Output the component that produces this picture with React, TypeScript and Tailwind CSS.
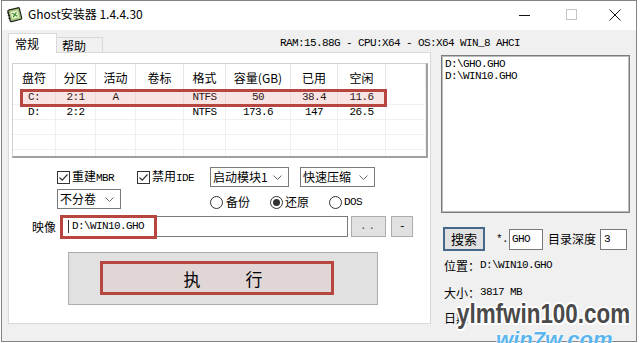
import React from 'react';

const cjk = "font-['Noto_Sans_CJK_SC','Noto_Sans',sans-serif]";
const mono = "font-['Liberation_Mono','Noto_Sans_CJK_SC',monospace] text-[11px] tracking-[-0.6px]";

const AppIcon = () => (
    <svg width="17" height="17" viewBox="0 0 18 18">
        <g transform="rotate(-14 9 9)">
            <rect x="3" y="3" width="12.5" height="12.5" rx="1.2" fill="#a7c97a" stroke="#222" strokeWidth="1.3" />
            <rect x="5.5" y="5.5" width="7.5" height="7.5" fill="#e6f0cf" />
            <path d="M7 7.2 L11.5 11.5 M11.5 7.2 L7 11.5" stroke="#3e8a30" strokeWidth="1.3" />
            <path d="M1.8 5.5 h2.4 M1.8 8.5 h2.4 M1.8 11.5 h2.4" stroke="#222" strokeWidth="1.1" />
        </g>
    </svg>
);

const Chevron = () => (
    <svg width="9" height="5" viewBox="0 0 9 5" className="shrink-0">
        <path d="M0.5 0.5 L4.5 4.5 L8.5 0.5" fill="none" stroke="#6a6a6a" strokeWidth="1" />
    </svg>
);

const CheckBox = () => (
    <div className="w-[13px] h-[13px] border border-[#333] bg-white flex items-center justify-center shrink-0">
        <svg width="11" height="11" viewBox="0 0 11 11">
            <path d="M1.5 5.5 L4.2 8.2 L9.5 2.5" fill="none" stroke="#333" strokeWidth="1.2" />
        </svg>
    </div>
);

const Radio = ({ checked }: { checked?: boolean }) => (
    <div className="w-[13px] h-[13px] rounded-full border border-[#333] bg-white flex items-center justify-center shrink-0">
        {checked && <div className="w-[7px] h-[7px] rounded-full bg-[#333]" />}
    </div>
);

const Select = ({ label, className }: { label: React.ReactNode; className: string }) => (
    <div className={`h-[20px] border border-[#7a7a7a] bg-white flex items-center justify-between pl-[2px] pr-[6px] text-[12px] text-black ${cjk} ${className}`}>
        <span className="leading-none">{label}</span>
        <Chevron />
    </div>
);

const headers = ['盘符', '分区', '活动', '卷标', '格式', '容量(GB)', '已用', '空闲', ''];
const rows = [
    ['C:', '2:1', 'A', '', 'NTFS', '50', '38.4', '11.6', ''],
    ['D:', '2:2', '', '', 'NTFS', '173.6', '147', '26.5', ''],
    ['', '', '', '', '', '', '', '', ''],
    ['', '', '', '', '', '', '', '', ''],
    ['', '', '', '', '', '', '', '', ''],
];

export default function App() {
    return (
        <div className="w-[640px] h-[343px] bg-white relative overflow-hidden">
            <div className="ml-px w-[636px] h-[342px] border border-[#838383] bg-[#f0f0f0] flex flex-col">
                {/* Title bar */}
                <div className="h-[29px] bg-white flex items-start shrink-0">
                    <div className="ml-[4px] mt-[5px]"><AppIcon /></div>
                    <div className={`ml-[5px] mt-[5px] text-[12px] leading-[16px] text-black ${cjk}`}>Ghost安装器 1.4.4.30</div>
                    <div className="ml-auto mr-[15px] mt-[8px] flex items-start">
                        <svg width="11" height="11" viewBox="0 0 11 11" className="mr-[36px]">
                            <path d="M0 6.5 H11" stroke="#111" strokeWidth="1" />
                        </svg>
                        <svg width="11" height="11" viewBox="0 0 11 11" className="mr-[32px]">
                            <rect x="0.5" y="0.5" width="10" height="10" fill="none" stroke="#c4c4c4" strokeWidth="1" />
                        </svg>
                        <svg width="12" height="12" viewBox="0 0 12 12">
                            <path d="M0.5 0.5 L11.5 11.5 M11.5 0.5 L0.5 11.5" stroke="#111" strokeWidth="1" />
                        </svg>
                    </div>
                </div>

                {/* Body */}
                <div className="flex-1 pl-[6px] pt-[3px]">
                    {/* Tabs + system info */}
                    <div className="flex items-end h-[20px]">
                        <div className={`relative z-10 w-[49px] h-[20px] bg-white border border-b-0 border-[#d9d9d9] pl-[6px] pt-[2px] text-[12px] leading-[15px] text-black ${cjk}`}>
                            常规
                        </div>
                        <div className={`w-[46px] h-[16px] bg-[#f0f0f0] border border-l-0 border-b-0 border-[#d9d9d9] pl-[5px] pt-[1px] text-[12px] leading-[14px] text-black ${cjk}`}>
                            帮助
                        </div>
                        <div className={`ml-[177px] self-center text-black ${mono}`}>RAM:15.88G - CPU:X64 - OS:X64 WIN_8 AHCI</div>
                    </div>

                    <div className="flex items-start -mt-px">
                        {/* Main tab panel */}
                        <div className="relative w-[423px] h-[272px] bg-white border border-[#d9d9d9] pl-[3px] pt-[10px] flex flex-col">
                            {/* Partition list */}
                            <div className="relative w-[416px] h-[95px] bg-white border-t border-l border-[#d0d0d0] border-r-2 border-b-2 border-r-[#a0a0a0] border-b-[#a0a0a0] overflow-hidden">
                                <div className="grid grid-cols-[43px_40px_40px_48px_42px_65px_47px_48px_1fr]">
                                    {headers.map((h, i) => (
                                        <div key={i} className={`h-[26px] border-r border-[#e6e6e6] flex items-center justify-center pt-[2px] text-[12px] text-black ${cjk}`}>
                                            {h}
                                        </div>
                                    ))}
                                    {rows.map((r, ri) =>
                                        r.map((c, ci) => (
                                            <div key={`${ri}-${ci}`} className={`h-[15px] border-r border-b border-[#efefef] flex items-center justify-center text-black ${mono}`}>
                                                {c}
                                            </div>
                                        ))
                                    )}
                                </div>
                                <div className="absolute left-[7px] top-[25px] w-[367px] h-[18px] border-[3px] border-[#b6463f] bg-[#e07a7a]/20 pointer-events-none" />
                            </div>

                            {/* Options row 1 */}
                            <div className="mt-[9px] ml-[45px] h-[20px] flex items-center">
                                <div className="w-[80px] flex items-center">
                                    <CheckBox />
                                    <span className={`ml-[2px] text-[12px] text-black ${cjk}`}>重建<span className={mono}>MBR</span></span>
                                </div>
                                <div className="w-[73px] flex items-center">
                                    <CheckBox />
                                    <span className={`ml-[2px] text-[12px] text-black ${cjk}`}>禁用<span className={mono}>IDE</span></span>
                                </div>
                                <Select label="启动模块1" className="w-[79px]" />
                                <Select label="快速压缩" className="w-[75px] ml-[11px]" />
                            </div>

                            {/* Options row 2 */}
                            <div className="mt-[2px] ml-[45px] h-[20px] flex items-center">
                                <Select label="不分卷" className="w-[64px]" />
                                <div className="ml-[89px] mt-[6px] flex items-center">
                                    <div className="w-[60px] flex items-center">
                                        <Radio />
                                        <span className={`ml-[3px] text-[12px] text-black ${cjk}`}>备份</span>
                                    </div>
                                    <div className="w-[59px] flex items-center">
                                        <Radio checked />
                                        <span className={`ml-[2px] text-[12px] text-black ${cjk}`}>还原</span>
                                    </div>
                                    <div className="flex items-center">
                                        <Radio />
                                        <span className={`ml-[2px] text-black ${mono}`}>DOS</span>
                                    </div>
                                </div>
                            </div>

                            {/* Image path */}
                            <div className="mt-[7px] h-[21px] flex items-center">
                                <span className={`ml-[20px] w-[28px] text-[12px] text-black ${cjk}`}>映像</span>
                                <div className="relative w-[288px] h-[21px] border border-[#7a7a7a] bg-white flex items-center pl-[11px]">
                                    <div className="absolute left-[7px] top-[3px] w-px h-[13px] bg-[#333]" />
                                    <span className={`text-black ${mono}`}>D:\WIN10.GHO</span>
                                    <div className="absolute left-[-1px] top-[-2px] w-[97px] h-[24px] border-[3px] border-[#b6463f] pointer-events-none" />
                                </div>
                                <div className={`ml-[3px] w-[35px] h-[21px] bg-[#e1e1e1] border border-[#adadad] flex items-center justify-center text-[#555] ${mono} tracking-[2px]`}>..</div>
                                <div className={`ml-[5px] w-[22px] h-[21px] bg-[#e1e1e1] border border-[#adadad] flex items-center justify-center text-black ${mono}`}>-</div>
                            </div>

                            {/* Execute */}
                            <div className="relative mt-[15px] ml-[56px] w-[310px] h-[53px] bg-[#e1e1e1] border border-[#adadad] flex items-center justify-center">
                                <div className="absolute left-[31px] top-[8px] w-[234px] h-[34px] border-[3px] border-[#b6463f] bg-[#e07a7a]/10" />
                                <div className={`relative flex gap-[45px] text-[17px] leading-none text-black ${cjk}`}>
                                    <span>执</span>
                                    <span>行</span>
                                </div>
                            </div>
                        </div>

                        {/* Right column */}
                        <div className="ml-[10px] mt-[3px] w-[189px] flex flex-col">
                            <div className="h-[158px] bg-white border border-[#7c7c7c] shadow-[inset_0_0_0_1px_#bcbcbc] pl-[3px] pt-[2px]">
                                <div className={`leading-[12px] text-black ${mono}`}>D:\GHO.GHO</div>
                                <div className={`leading-[12px] text-black ${mono}`}>D:\WIN10.GHO</div>
                            </div>

                            <div className="mt-[14px] h-[24px] flex items-center">
                                <div className={`ml-[2px] w-[42px] h-[24px] bg-[#e1e1e1] border-2 border-[#44678a] flex items-center justify-center text-[13px] text-black ${cjk}`}>搜索</div>
                                <span className={`ml-[11px] w-[13px] text-black ${mono}`}>*.</span>
                                <div className={`w-[34px] h-[21px] border border-[#7a7a7a] bg-white flex items-center pl-[2px] text-black ${mono}`}>GHO</div>
                                <span className={`ml-[5px] text-[12px] text-black ${cjk}`}>目录深度</span>
                                <div className={`ml-[4px] w-[27px] h-[21px] border border-[#7a7a7a] bg-white flex items-center pl-[3px] text-black ${mono}`}>3</div>
                            </div>

                            <div className={`mt-[7px] ml-[3px] h-[15px] flex items-center text-[12px] text-black ${cjk}`}>
                                位置：<span className={mono}>D:\WIN10.GHO</span>
                            </div>
                            <div className={`mt-[12px] ml-[3px] h-[15px] flex items-center text-[12px] text-black ${cjk}`}>
                                大小：<span className={mono}>3817 MB</span>
                            </div>
                            <div className={`mt-[10px] ml-[3px] h-[15px] flex items-center text-[12px] text-black ${cjk}`}>
                                日期：
                            </div>
                        </div>
                    </div>
                </div>
            </div>

            {/* Watermark */}
            <div className="absolute left-[496px] top-[329px] font-['Liberation_Sans',sans-serif] font-bold italic text-[22px] leading-[22px] text-[#5cb6ee] [text-shadow:0_0_2px_#fff,0_0_2px_#fff]">
                win7w.com
            </div>
            <div className="absolute left-[457px] top-[300px] origin-left scale-x-[0.8] font-['Liberation_Sans',sans-serif] font-bold text-[28px] leading-[28px] text-[#4a4a4a] [text-shadow:-1.5px_-1.5px_0_#fff,1.5px_-1.5px_0_#fff,-1.5px_1.5px_0_#fff,1.5px_1.5px_0_#fff,0_2px_0_#fff,0_-2px_0_#fff,2px_0_0_#fff,-2px_0_0_#fff]">
                ylmfwin100.com
            </div>
        </div>
    );
}
